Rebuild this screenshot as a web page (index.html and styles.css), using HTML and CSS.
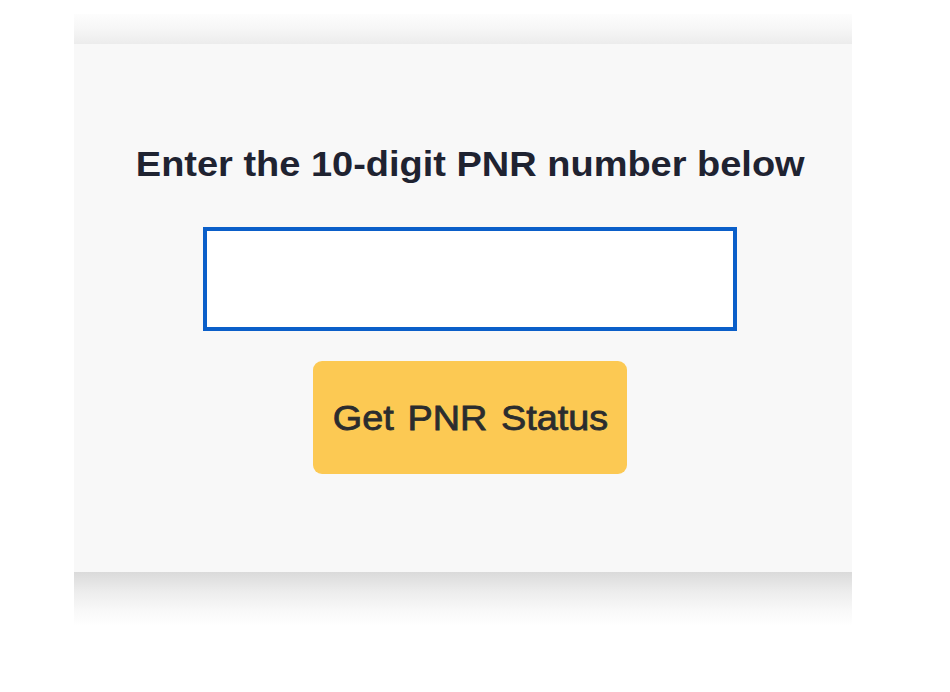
FILE: index.html
```html
<!DOCTYPE html>
<html>
<head>
<meta charset="utf-8">
<link rel="stylesheet" href="styles.css">
</head>
<body>
<div class="page">
  <div class="panel">
    <div class="shade-top"></div>
    <div class="card">
      <h2 class="title">Enter the 10-digit PNR number below</h2>
      <input class="pnr-input" type="text">
      <button class="pnr-btn"><span class="btn-label">Get PNR Status</span></button>
    </div>
    <div class="shade-bottom"></div>
  </div>
</div>
</body>
</html>
```
FILE: styles.css
```css
html, body {
  margin: 0;
  padding: 0;
  background: #ffffff;
}
.page {
  width: 950px;
  height: 692px;
  padding-top: 14px;
  padding-left: 74px;
  box-sizing: border-box;
}
.panel {
  width: 778px;
  display: flex;
  flex-direction: column;
}
.shade-top {
  height: 30px;
  background: linear-gradient(to bottom, #fdfdfd 0%, #f6f6f6 50%, #ececec 100%);
}
.card {
  background: #f8f8f8;
  height: 528px;
  display: flex;
  flex-direction: column;
  align-items: center;
  padding-top: 100px;
  padding-left: 14px;
  box-sizing: border-box;
}
.title {
  margin: 0;
  font-family: "Liberation Sans", Arial, sans-serif;
  font-weight: bold;
  font-size: 35px;
  line-height: 40px;
  color: #1f2331;
  white-space: nowrap;
  transform: scaleX(1.085);
}
.pnr-input {
  margin-top: 43px;
  width: 534px;
  height: 104px;
  box-sizing: border-box;
  border: 4px solid #0b5fc9;
  background: #ffffff;
  outline: none;
  padding: 0 12px;
  font-family: "Liberation Sans", Arial, sans-serif;
  font-size: 28px;
}
.pnr-btn {
  margin-top: 30px;
  width: 314px;
  height: 113px;
  border: none;
  border-radius: 9px;
  background: #fcc953;
  padding: 0;
  cursor: pointer;
}
.btn-label {
  display: inline-block;
  font-family: "Liberation Sans", Arial, sans-serif;
  font-size: 35px;
  color: #2a2c2e;
  -webkit-text-stroke: 0.8px #2a2c2e;
  word-spacing: 3px;
  white-space: nowrap;
  transform: scaleX(1.08);
}
.shade-bottom {
  height: 54px;
  background: linear-gradient(to bottom, #dadada 0%, #ececec 35%, #f8f8f8 70%, #ffffff 100%);
}
```
